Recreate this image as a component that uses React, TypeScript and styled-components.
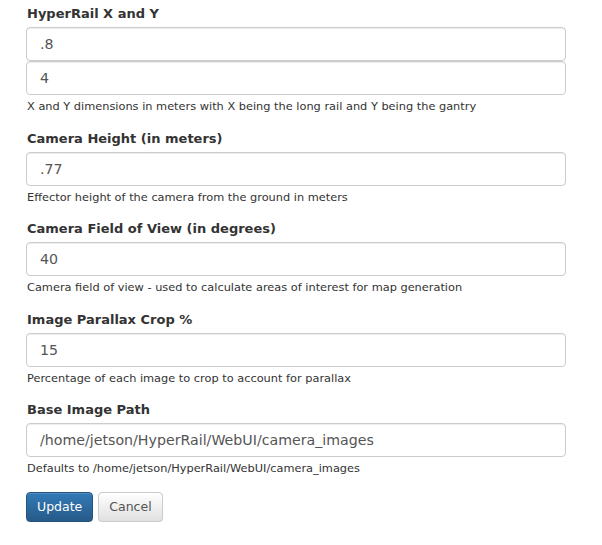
import React from 'react';
import styled, { createGlobalStyle } from 'styled-components';

const GlobalStyle = createGlobalStyle`
    body {
        margin: 0;
        background: #ffffff;
        font-family: "DejaVu Sans", Verdana, sans-serif;
        color: #333333;
    }
`;

const Form = styled.form`
    width: 540px;
    padding: 5px 0 0 26px;
    display: flex;
    flex-direction: column;
`;

const Group = styled.div`
    display: flex;
    flex-direction: column;
    margin-bottom: 15.5px;
`;

const Label = styled.label`
    font-weight: 700;
    font-size: 13px;
    line-height: 18px;
    margin-bottom: 4px;
    padding-left: 1px;
    color: #333333;
`;

const Input = styled.input`
    box-sizing: border-box;
    height: 34px;
    width: 100%;
    padding: 6px 13px;
    font-family: "DejaVu Sans", Verdana, sans-serif;
    font-size: 14.2px;
    color: #555555;
    background: #ffffff;
    border: 1px solid #cccccc;
    border-radius: 4px;
    box-shadow: inset 0 1px 1px rgba(0, 0, 0, 0.075);
    outline: none;
`;

const Help = styled.span`
    display: block;
    margin-top: 3px;
    padding-left: 1px;
    font-size: 11.35px;
    line-height: 16px;
    color: #333333;
`;

const Buttons = styled.div`
    display: flex;
    gap: 5px;
`;

const Button = styled.button<{ $primary?: boolean }>`
    height: 30px;
    padding: 0 10px;
    font-family: "DejaVu Sans", Verdana, sans-serif;
    font-size: 12.5px;
    border-radius: 4px;
    color: ${(p) => (p.$primary ? '#ffffff' : '#555555')};
    border: 1px solid ${(p) => (p.$primary ? '#245580' : '#cccccc')};
    background-image: ${(p) =>
        p.$primary
            ? 'linear-gradient(to bottom, #337ab7 0%, #265a88 100%)'
            : 'linear-gradient(to bottom, #ffffff 0%, #e0e0e0 100%)'};
    box-shadow: inset 0 1px 0 rgba(255, 255, 255, 0.15), 0 1px 1px rgba(0, 0, 0, 0.075);
    cursor: pointer;
`;

const fields = [
    {
        label: 'HyperRail X and Y',
        values: ['.8', '4'],
        help: 'X and Y dimensions in meters with X being the long rail and Y being the gantry',
    },
    {
        label: 'Camera Height (in meters)',
        values: ['.77'],
        help: 'Effector height of the camera from the ground in meters',
    },
    {
        label: 'Camera Field of View (in degrees)',
        values: ['40'],
        help: 'Camera field of view - used to calculate areas of interest for map generation',
    },
    {
        label: 'Image Parallax Crop %',
        values: ['15'],
        help: 'Percentage of each image to crop to account for parallax',
    },
    {
        label: 'Base Image Path',
        values: ['/home/jetson/HyperRail/WebUI/camera_images'],
        help: 'Defaults to /home/jetson/HyperRail/WebUI/camera_images',
    },
];

const App = () => {
    return (
        <>
            <GlobalStyle />
            <Form onSubmit={(e) => e.preventDefault()}>
                {fields.map((f) => (
                    <Group key={f.label}>
                        <Label>{f.label}</Label>
                        {f.values.map((v, i) => (
                            <Input key={i} defaultValue={v} />
                        ))}
                        <Help>{f.help}</Help>
                    </Group>
                ))}
                <Buttons>
                    <Button $primary type="submit">Update</Button>
                    <Button type="button">Cancel</Button>
                </Buttons>
            </Form>
        </>
    );
};

export default App;
